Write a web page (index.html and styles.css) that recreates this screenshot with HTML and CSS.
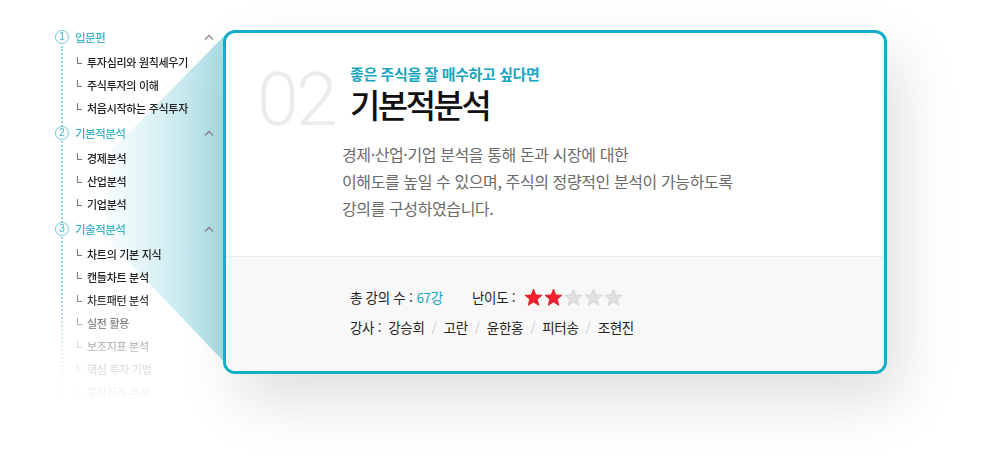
FILE: index.html
```html
<!DOCTYPE html>
<html lang="ko">
<head>
<meta charset="utf-8">
<title>기본적분석</title>
<link rel="stylesheet" href="styles.css">
</head>
<body>
<div class="page">
  <div class="wedge"></div>
  <nav class="sidebar">
    <div class="group">
      <div class="head"><span class="num">1</span><span class="head-title">입문편</span><svg class="caret" viewBox="0 0 10 6"><path d="M1 5.5 L5 1.5 L9 5.5" fill="none" stroke="#8a8a8a" stroke-width="1.3"/></svg></div>
      <div class="sub"><span class="mark"></span>투자심리와 원칙세우기</div>
      <div class="sub"><span class="mark"></span>주식투자의 이해</div>
      <div class="sub"><span class="mark"></span>처음시작하는 주식투자</div>
    </div>
    <div class="group">
      <div class="head"><span class="num">2</span><span class="head-title">기본적분석</span><svg class="caret" viewBox="0 0 10 6"><path d="M1 5.5 L5 1.5 L9 5.5" fill="none" stroke="#8a8a8a" stroke-width="1.3"/></svg></div>
      <div class="sub"><span class="mark"></span>경제분석</div>
      <div class="sub"><span class="mark"></span>산업분석</div>
      <div class="sub"><span class="mark"></span>기업분석</div>
    </div>
    <div class="group">
      <div class="head"><span class="num">3</span><span class="head-title">기술적분석</span><svg class="caret" viewBox="0 0 10 6"><path d="M1 5.5 L5 1.5 L9 5.5" fill="none" stroke="#8a8a8a" stroke-width="1.3"/></svg></div>
      <div class="sub"><span class="mark"></span>차트의 기본 지식</div>
      <div class="sub"><span class="mark"></span>캔들차트 분석</div>
      <div class="sub"><span class="mark"></span>차트패턴 분석</div>
      <div class="sub"><span class="mark"></span>실전 활용</div>
      <div class="sub"><span class="mark"></span>보조지표 분석</div>
      <div class="sub"><span class="mark"></span>핵심 투자 기법</div>
      <div class="sub"><span class="mark"></span>투자심리 분석</div>
    </div>
  </nav>
  <section class="card">
    <div class="card-top">
      <div class="big-num">02</div>
      <div class="card-text">
        <p class="subtitle">좋은 주식을 잘 매수하고 싶다면</p>
        <h1 class="title">기본적분석</h1>
        <p class="desc">경제·산업·기업 분석을 통해 돈과 시장에 대한<br>이해도를 높일 수 있으며, 주식의 정량적인 분석이 가능하도록<br>강의를 구성하였습니다.</p>
      </div>
    </div>
    <div class="card-bottom">
      <div class="meta-row">
        <span class="meta-item">총 강의 수 : <span class="accent">67강</span></span>
        <span class="meta-item level">난이도 :
          <span class="stars">
            <svg class="star on" viewBox="0 0 20 20"><polygon points="10,1.2 12.5,7.3 19,7.6 14,11.8 15.6,18.3 10,14.7 4.4,18.3 6,11.8 1,7.6 7.5,7.3"/></svg>
            <svg class="star on" viewBox="0 0 20 20"><polygon points="10,1.2 12.5,7.3 19,7.6 14,11.8 15.6,18.3 10,14.7 4.4,18.3 6,11.8 1,7.6 7.5,7.3"/></svg>
            <svg class="star" viewBox="0 0 20 20"><polygon points="10,1.2 12.5,7.3 19,7.6 14,11.8 15.6,18.3 10,14.7 4.4,18.3 6,11.8 1,7.6 7.5,7.3"/></svg>
            <svg class="star" viewBox="0 0 20 20"><polygon points="10,1.2 12.5,7.3 19,7.6 14,11.8 15.6,18.3 10,14.7 4.4,18.3 6,11.8 1,7.6 7.5,7.3"/></svg>
            <svg class="star" viewBox="0 0 20 20"><polygon points="10,1.2 12.5,7.3 19,7.6 14,11.8 15.6,18.3 10,14.7 4.4,18.3 6,11.8 1,7.6 7.5,7.3"/></svg>
          </span>
        </span>
      </div>
      <div class="meta-row teachers"><span class="label">강사 :</span><span class="t">강승희</span><span class="sep">/</span><span class="t">고란</span><span class="sep">/</span><span class="t">윤한홍</span><span class="sep">/</span><span class="t">피터송</span><span class="sep">/</span><span class="t">조현진</span></div>
    </div>
  </section>
</div>
</body>
</html>
```

FILE: styles.css
```css
html, body {
  margin: 0;
  padding: 0;
  background: #ffffff;
}

body {
  font-family: "Noto Sans CJK KR", "Noto Sans", sans-serif;
  color: #222;
}

.page {
  position: relative;
  width: 998px;
  height: 475px;
  overflow: hidden;
  display: flex;
  align-items: flex-start;
}

.wedge {
  position: absolute;
  left: 0;
  top: 0;
  width: 230px;
  height: 475px;
  background: linear-gradient(to right, rgba(255,255,255,0) 95px, #dff3f6 150px, #a9dde5 226px);
  clip-path: polygon(226px 34px, 112px 150px, 104px 236px, 226px 364px);
}

/* sidebar */
.sidebar {
  position: relative;
  width: 223px;
  flex: none;
  box-sizing: border-box;
  padding: 25px 6px 0 55px;
  -webkit-mask-image: linear-gradient(to bottom, #000 292px, rgba(0,0,0,0.55) 325px, rgba(0,0,0,0.25) 350px, rgba(0,0,0,0.12) 372px, rgba(0,0,0,0.04) 395px, transparent 410px);
  mask-image: linear-gradient(to bottom, #000 292px, rgba(0,0,0,0.55) 325px, rgba(0,0,0,0.25) 350px, rgba(0,0,0,0.12) 372px, rgba(0,0,0,0.04) 395px, transparent 410px);
  height: 475px;
}

.sidebar::before {
  content: "";
  position: absolute;
  left: 61px;
  top: 46px;
  bottom: 0;
  width: 0;
  border-left: 2px dotted #8fd4df;
}

.group + .group {
  margin-top: 2px;
}

.head {
  position: relative;
  display: flex;
  align-items: center;
  height: 24px;
  margin-bottom: 1px;
}

.num {
  width: 12px;
  height: 12px;
  border: 1px solid #6ccad8;
  border-radius: 50%;
  background: #fff;
  color: #3bb6ca;
  font-family: "Liberation Sans", sans-serif;
  font-size: 10px;
  line-height: 12px;
  text-align: center;
  flex: none;
}

.head-title {
  margin-left: 6px;
  font-size: 11.5px;
  font-weight: 500;
  letter-spacing: -0.5px;
  color: #3ab4c9;
}

.caret {
  margin-left: auto;
  margin-right: 3px;
  width: 10px;
  height: 6px;
}

.sub {
  display: flex;
  align-items: center;
  height: 23px;
  padding-left: 22px;
  font-size: 11px;
  font-weight: 500;
  letter-spacing: -0.3px;
  color: #222;
}

.mark {
  width: 4px;
  height: 6px;
  border-left: 1px solid #777;
  border-bottom: 1px solid #777;
  margin-right: 5px;
  margin-top: -3px;
  flex: none;
}

/* card */
.card {
  position: relative;
  margin-top: 30px;
  width: 664px;
  height: 344px;
  box-sizing: border-box;
  border: 3px solid #14aec7;
  border-radius: 12px;
  background: #fff;
  overflow: hidden;
  display: flex;
  flex-direction: column;
  box-shadow: 14px 26px 60px rgba(0,0,0,0.13);
  flex: none;
}

.card-top {
  height: 223px;
  box-sizing: border-box;
  display: flex;
  align-items: flex-start;
  padding: 31px 0 0 31px;
  flex: none;
}

.big-num {
  width: 93px;
  margin-top: -2px;
  font-family: Roboto, "Liberation Sans", sans-serif;
  font-weight: 300;
  font-size: 75px;
  line-height: 74px;
  letter-spacing: -2.5px;
  color: #ebebeb;
  flex: none;
}

.card-text {
  display: flex;
  flex-direction: column;
}

.subtitle {
  margin: 0;
  font-size: 15px;
  line-height: 20px;
  font-weight: 700;
  letter-spacing: -0.4px;
  color: #17a6bf;
}

.title {
  margin: 1px 0 0;
  font-size: 33px;
  line-height: 38px;
  font-weight: 500;
  letter-spacing: -2.5px;
  color: #111;
}

.desc {
  margin: 18px 0 0 -8px;
  font-size: 16px;
  line-height: 27px;
  font-weight: 400;
  letter-spacing: -0.4px;
  color: #6a6a6a;
}

.card-bottom {
  flex: 1;
  background: #f8f8f8;
  border-top: 1px solid #ececec;
  padding: 26px 0 0 124px;
}

.meta-row {
  display: flex;
  align-items: center;
  height: 28px;
  font-size: 13.5px;
  letter-spacing: -0.3px;
  color: #222;
}

.meta-item {
  display: flex;
  align-items: center;
}

.accent {
  color: #17a6bf;
  margin-left: 4px;
}

.level {
  margin-left: 29px;
}

.stars {
  display: flex;
  margin-left: 9px;
  gap: 1px;
}

.star {
  width: 19px;
  height: 19px;
}

.star polygon {
  fill: #e0e0e0;
  stroke: #cfcfcf;
  stroke-width: 0.8;
}

.star.on polygon {
  fill: #f3202e;
  stroke: #d4161f;
}

.teachers {
  margin-top: 2px;
}

.label {
  margin-right: 7px;
}

.sep {
  margin: 0 7px;
  color: #cfcfcf;
}
```
